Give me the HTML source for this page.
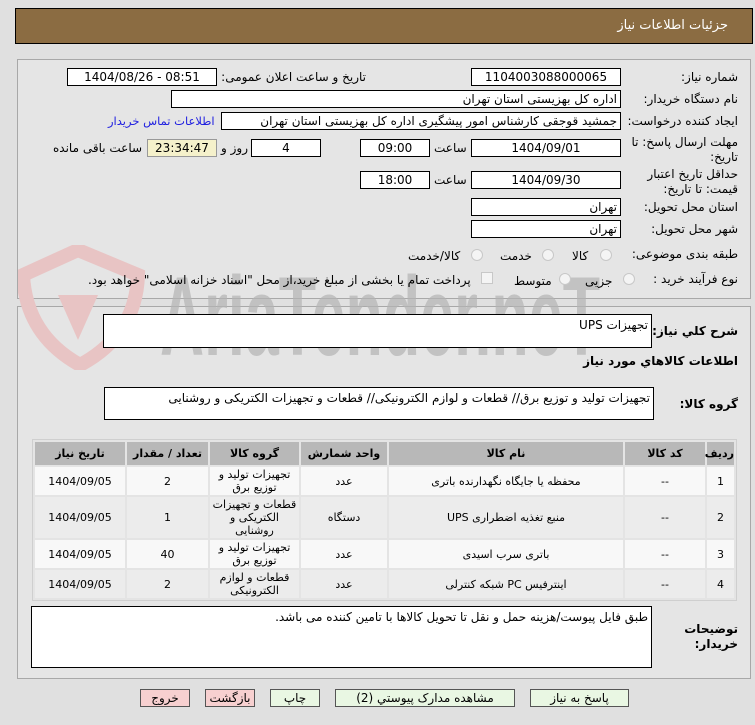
<!DOCTYPE html>
<html><head><meta charset="utf-8">
<style>
*{box-sizing:border-box;margin:0;padding:0}
body{width:755px;height:725px;background:#e0e0e0;font-family:"DejaVu Sans","Liberation Sans",sans-serif;font-size:11px;color:#000;position:relative;overflow:hidden}
.a{position:absolute;white-space:nowrap}
.box{position:absolute;background:#fff;border:1px solid #000;height:18px;line-height:16px;text-align:center;font-size:12px}
.r{text-align:right;padding-right:3px;direction:rtl}
.lbl{position:absolute;direction:rtl;text-align:right;white-space:nowrap;font-size:12px}
.panel{position:absolute;border:1px solid #a8a8a8;background:#e5e5e5}
.radio{position:absolute;width:12px;height:12px;border-radius:50%;border:1px solid #c8c8c8;background:#f4f4f4}
table{border-collapse:separate;border-spacing:2px;position:absolute;left:32px;top:439px;width:705px;direction:rtl;background:#e4e4e4;border:1px solid #cfcfcf;table-layout:fixed}
td,th{text-align:center;font-size:11px;line-height:13px}
th{background:#b8b8b8;height:23px;font-weight:bold}
tr.o td{background:#f8f8f8}
tr.e td{background:#ececec}
.btn{position:absolute;top:689px;height:18px;border:1px solid #555;line-height:16px;text-align:center;font-size:12px;direction:rtl}
.g{background:#e9f7e3}.p{background:#f7d0d0}
</style></head><body>
<div class="a" style="left:15px;top:8px;width:738px;height:36px;background:#8b6c42;border:1px solid #000"></div>
<div class="lbl" style="right:27px;top:18px;color:#fff;font-size:13px">جزئیات اطلاعات نیاز</div>

<div class="panel" style="left:17px;top:59px;width:734px;height:240px"></div>
<div class="panel" style="left:17px;top:306px;width:734px;height:373px"></div>

<!-- watermark -->
<svg class="a" style="left:18px;top:245px" width="130" height="125" viewBox="0 0 130 125"><path d="M60 5 L120 30 Q118 90 62 120 Q8 90 5 30 Z" fill="none" stroke="#e8c4c4" stroke-width="14"/><path d="M40 50 L80 50 L60 95 Z" fill="#e8c4c4"/></svg>
<svg class="a" style="left:0;top:0" width="755" height="725"><text x="160" y="355" font-family="Liberation Sans, sans-serif" font-weight="bold" font-size="112" textLength="440" lengthAdjust="spacingAndGlyphs" fill="#b4b4b4" fill-opacity="0.7">AriaTender.neT</text></svg>

<div class="lbl" style="right:17px;top:70px">شماره نیاز:</div>
<div class="box" style="left:471px;top:68px;width:150px">1104003088000065</div>
<div class="lbl" style="right:389px;top:70px">تاریخ و ساعت اعلان عمومی:</div>
<div class="box" style="left:67px;top:68px;width:150px">1404/08/26 - 08:51</div>

<div class="lbl" style="right:17px;top:92px">نام دستگاه خریدار:</div>
<div class="box r" style="left:171px;top:90px;width:450px">اداره کل بهزیستی استان تهران</div>

<div class="lbl" style="right:17px;top:114px">ایجاد کننده درخواست:</div>
<div class="box r" style="left:221px;top:112px;width:400px">جمشید قوجقی کارشناس امور پیشگیری اداره کل بهزیستی استان تهران</div>
<div class="lbl" style="left:108px;top:114px;color:#2020e0;font-size:11.5px">اطلاعات تماس خریدار</div>

<div class="lbl" style="right:17px;top:135px;line-height:15px">مهلت ارسال پاسخ: تا<br>تاریخ:</div>
<div class="box" style="left:471px;top:139px;width:150px">1404/09/01</div>
<div class="lbl" style="left:434px;top:141px">ساعت</div>
<div class="box" style="left:360px;top:139px;width:70px">09:00</div>
<div class="box" style="left:251px;top:139px;width:70px">4</div>
<div class="lbl" style="left:221px;top:141px">روز و</div>
<div class="box" style="left:147px;top:139px;width:70px;background:#f5f1cb;border-color:#999">23:34:47</div>
<div class="lbl" style="left:53px;top:141px">ساعت باقی مانده</div>

<div class="lbl" style="right:17px;top:167px;line-height:15px">حداقل تاریخ اعتبار<br>قیمت: تا تاریخ:</div>
<div class="box" style="left:471px;top:171px;width:150px">1404/09/30</div>
<div class="lbl" style="left:434px;top:173px">ساعت</div>
<div class="box" style="left:360px;top:171px;width:70px">18:00</div>

<div class="lbl" style="right:17px;top:200px">استان محل تحویل:</div>
<div class="box r" style="left:471px;top:198px;width:150px">تهران</div>
<div class="lbl" style="right:17px;top:222px">شهر محل تحویل:</div>
<div class="box r" style="left:471px;top:220px;width:150px">تهران</div>

<div class="lbl" style="right:17px;top:247px">طبقه بندی موضوعی:</div>
<div class="radio" style="left:600px;top:249px"></div><div class="lbl" style="left:572px;top:249px">کالا</div>
<div class="radio" style="left:542px;top:249px"></div><div class="lbl" style="left:500px;top:249px">خدمت</div>
<div class="radio" style="left:471px;top:249px"></div><div class="lbl" style="left:408px;top:249px">کالا/خدمت</div>

<div class="lbl" style="right:17px;top:272px">نوع فرآیند خرید :</div>
<div class="radio" style="left:623px;top:273px"></div><div class="lbl" style="left:585px;top:274px">جزیی</div>
<div class="radio" style="left:559px;top:273px"></div><div class="lbl" style="left:514px;top:274px">متوسط</div>
<div class="a" style="left:481px;top:272px;width:12px;height:12px;border:1px solid #c8c8c8;background:#f4f4f4"></div>
<div class="lbl" style="left:88px;top:273px">پرداخت تمام یا بخشی از مبلغ خرید،از محل "اسناد خزانه اسلامی" خواهد بود.</div>

<div class="lbl" style="right:17px;top:324px;font-weight:bold">شرح کلي نياز:</div>
<div class="a r" style="left:103px;top:314px;width:549px;height:34px;background:#fff;border:1px solid #000;direction:rtl;font-size:12px;padding-top:3px">تجهیزات UPS</div>
<div class="lbl" style="right:17px;top:354px;font-weight:bold">اطلاعات کالاهاي مورد نياز</div>
<div class="lbl" style="right:17px;top:397px;font-weight:bold">گروه کالا:</div>
<div class="a r" style="left:104px;top:387px;width:550px;height:33px;background:#fff;border:1px solid #000;direction:rtl;font-size:12px;padding-top:3px">تجهیزات تولید و توزیع برق// قطعات و لوازم الکترونیکی// قطعات و تجهیزات الکتریکی و روشنایی</div>

<table>
<tr><th style="width:27px">ردیف</th><th style="width:80px">کد کالا</th><th style="width:234px">نام کالا</th><th style="width:86px">واحد شمارش</th><th style="width:89px">گروه کالا</th><th style="width:81px">تعداد / مقدار</th><th>تاریخ نیاز</th></tr>
<tr class="o" style="height:28px"><td>1</td><td>--</td><td>محفظه یا جایگاه نگهدارنده باتری</td><td>عدد</td><td>تجهیزات تولید و توزیع برق</td><td>2</td><td>1404/09/05</td></tr>
<tr class="e" style="height:41px"><td>2</td><td>--</td><td>منبع تغذیه اضطراری UPS</td><td>دستگاه</td><td>قطعات و تجهیزات الکتریکی و روشنایی</td><td>1</td><td>1404/09/05</td></tr>
<tr class="o" style="height:28px"><td>3</td><td>--</td><td>باتری سرب اسیدی</td><td>عدد</td><td>تجهیزات تولید و توزیع برق</td><td>40</td><td>1404/09/05</td></tr>
<tr class="e" style="height:28px"><td>4</td><td>--</td><td>اینترفیس PC شبکه کنترلی</td><td>عدد</td><td>قطعات و لوازم الکترونیکی</td><td>2</td><td>1404/09/05</td></tr>
</table>

<div class="lbl" style="right:17px;top:622px;font-weight:bold;line-height:15px">توضیحات<br>خریدار:</div>
<div class="a r" style="left:31px;top:606px;width:621px;height:62px;background:#fff;border:1px solid #000;direction:rtl;font-size:12px;padding-top:3px">طبق فایل پیوست/هزینه حمل و نقل تا تحویل کالاها با تامین کننده می باشد.</div>

<div class="btn g" style="left:530px;width:99px">پاسخ به نیاز</div>
<div class="btn g" style="left:335px;width:180px">مشاهده مدارک پیوستي (2)</div>
<div class="btn g" style="left:270px;width:50px">چاپ</div>
<div class="btn p" style="left:205px;width:50px">بازگشت</div>
<div class="btn p" style="left:140px;width:50px">خروج</div>
</body></html>
